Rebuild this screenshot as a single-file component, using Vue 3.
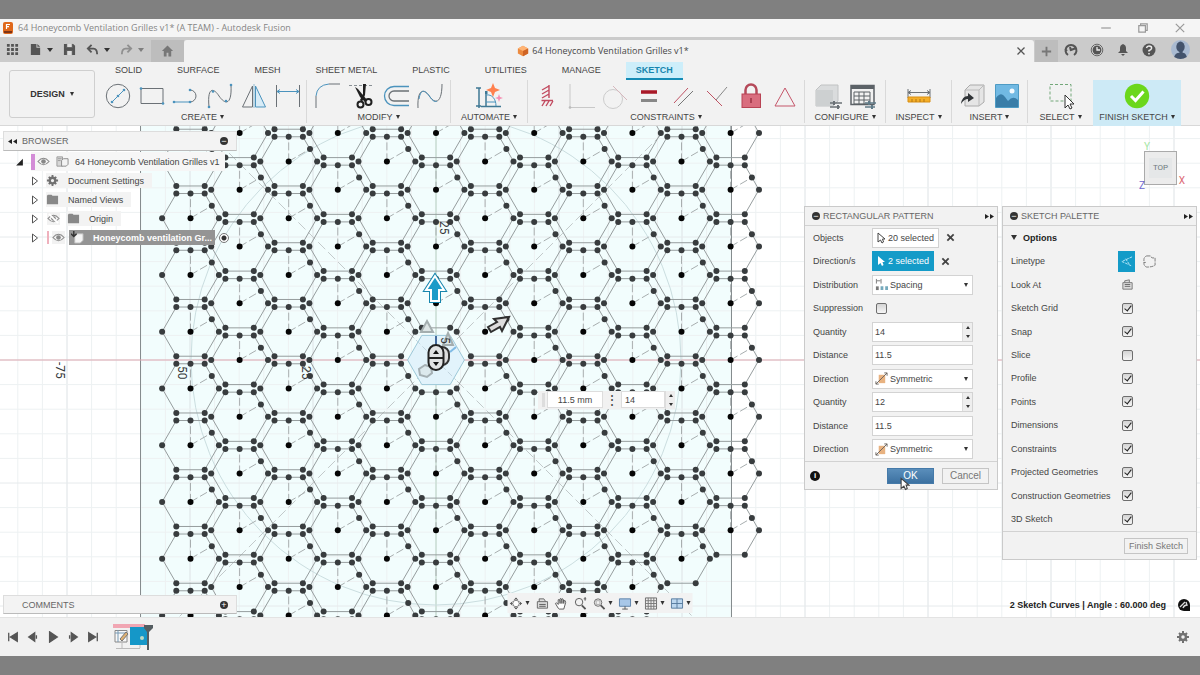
<script setup>
import { ref } from 'vue'

const R = 28.4
const A = 24.6
const cells = []
for (let k = -5; k <= 6; k++) {
  for (let n = -5; n <= 5; n++) {
    const row = k % 2 === 0 ? n : n + 0.5
    if (k === 0 && n === 0) continue
    if (k === 6 && row > 3) continue
    if (k === 5 && row > 3.5) continue
    cells.push({ x: 436 + k * 49.1, y: 360 + row * 56.75 })
  }
}
const hex = `M${-R} 0 L-14.2 ${-A} H14.2 L${R} 0 L14.2 ${A} H-14.2Z`
const nodes = [[-R, 0], [-14.2, -A], [0, -A], [14.2, -A], [21.3, -12.3], [R, 0], [14.2, A], [-14.2, A]]
const vLines = Array.from({ length: 49 }, (_, i) => ({ p: 436 + (i - 18) * 24.6, major: (i - 18) % 5 === 0 }))
const hLines = Array.from({ length: 21 }, (_, i) => ({ p: 360 + (i - 10) * 24.6, major: (i - 10) % 5 === 0 }))

const g = '#6b7176'
const b = '#4b93bd'
const red = '#c5566a'
const dot = (x, y, c = b) => `<circle cx="${x}" cy="${y}" r="1.3" fill="${c}"/>`
const icons = {
  circle: `<circle cx="14" cy="14" r="11.7" stroke="${g}"/><path d="M8 20 20 8" stroke="${b}"/>${dot(8, 20)}${dot(14, 14)}${dot(20, 8)}`,
  rect: `<path d="M3 6.500H25V21.500H3z" stroke="${g}"/>${dot(3, 6.500)}${dot(25, 21.500)}`,
  arc: `<path d="M2 20H18" stroke="${b}"/><path d="M18 8A6 6 0 0 1 18 20" stroke="${g}"/>${dot(2, 20)}${dot(18, 20)}${dot(18, 8)}`,
  spline: `<path d="M3 25C1 4 8 6 13 14C20 24 26 22 25 3" stroke="${g}"/>${dot(3, 25)}${dot(7, 9.500)}${dot(20, 19)}${dot(25, 3)}`,
  mirror: `<path d="M12.500 4V25H2.500z" stroke="${g}"/><path d="M15.500 4V25H25.500z" stroke="${b}" fill="#d8ecf7"/><path d="M14 2V26" stroke="${b}" stroke-width=".6"/>`,
  dimension: `<path d="M2.500 3V25M25.500 3V25" stroke="${g}"/><path d="M3 9.500H25M6 7.500 3 9.500 6 11.500M22 7.500 25 9.500 22 11.500" stroke="${b}"/>`,
  fillet: `<path d="M2 14Q3 3 15 2" stroke="${b}"/><path d="M2 14V26M15 2H26" stroke="${g}"/>`,
  trim: `<path d="M1 3.500H26" stroke="#899095" stroke-dasharray="3 2"/><path d="M7 5 10 7 19 18 17 20 12 15z" fill="#202020"/><path d="M15 2H18L17 13 14 20 12 18 15 12z" fill="#202020"/><circle cx="12.500" cy="22.500" r="3" stroke="#202020" stroke-width="2"/><circle cx="20.500" cy="20" r="3" stroke="#202020" stroke-width="2"/>`,
  offset: `<path d="M27 4.500H12A9.500 9.500 0 0 0 12 23.500H27" stroke="${b}" stroke-width="1.300"/><path d="M27 9H12A5 5 0 0 0 12 19H27" stroke="${g}" stroke-width="1.300"/>`,
  curve: `<path d="M2 26C1 5 9 7 14 15C20 23 26 20 26 2" stroke="${g}"/><path d="M3 17C5 5 10 9 14 15Q18 21 21 19" stroke="${b}"/>`,
  automate: `<path d="M4 6V26M1 6H6M1 24H6M6 24.500H26M11 10V24" stroke="#3f7894" stroke-width="1.500"/><path d="M11 13C17 12 21 17 21 24M11 20H21" stroke="${b}"/><rect x="10" y="9" width="2.500" height="3" fill="#3f7894"/><path d="M18 1 20 6 25 8 20 10 18 15 16 10 11 8 16 6z" fill="#ff804e"/><path d="M24 12 25 15 28 16 25 17 24 20 23 17 20 16 23 15z" fill="#f58db1"/>`,
  fix: `<path d="M16 3V16M8.500 18.500H20M9 8 16 4M9 12 16 8M9 16 16 12M9 24 12 19M13 24 16 19M17 24 20 19" stroke="#c24b60" stroke-width="1.400"/>`,
  perpendicular: `<path d="M3 2V25.500H28" stroke="#c8c8c8"/>${dot(3, 25.500, '#bbb')}`,
  tangent: `<circle cx="12" cy="17" r="9.500" stroke="#ccc"/><path d="M12 4 26 18" stroke="#d6b7bd"/>`,
  equal: `<path d="M6 10H22" stroke="#a91928" stroke-width="3.500"/><path d="M6 18.500H22" stroke="#888" stroke-width="3"/>`,
  parallel: `<path d="M5 21 19 6" stroke="#bf5364"/><path d="M9 24 24 9" stroke="#777"/>`,
  coincident: `<path d="M4 9 19 24" stroke="#bf5364"/><path d="M13 18 24 5" stroke="#888"/>`,
  lock: `<path d="M8.500 12V8A5.500 5.500 0 0 1 19.500 8V12" stroke="#b54a5a" stroke-width="2.500"/><rect x="5" y="12" width="18.500" height="13.500" fill="#d96d7e" stroke="#b84354"/><path d="M14 16V21" stroke="#9b3345" stroke-width="1.500"/>`,
  triangle: `<path d="M14 6 24 24H4z" stroke="${red}"/>`,
  configure: `<path d="M2 8 7 3H24V19L19 24H2z" fill="#dadcdd" stroke="#c0c2c3"/><path d="M19 8V24H2V8z" fill="#cdd0d1"/><path d="M16 21H28M16 25H26" stroke="${g}" stroke-width="1.500"/><path d="M20 19V23M24 23V27" stroke="${g}" stroke-width="2"/>`,
  table: `<path d="M3 3.500H26V22.500H3z" stroke="#5c6267" stroke-width="1.500"/><path d="M3 5H26" stroke="#5c6267" stroke-width="4"/><path d="M6 10H22V22H6zM11 10V22M16 10V22M6 14H22M6 18H22" stroke="#5c6267"/><path d="M17 21H28M17 25H27" stroke="#607b88" stroke-width="1.500"/><path d="M21 19V23M24 23V27" stroke="#607b88" stroke-width="2"/>`,
  measure: `<path d="M3 7V16M25 7V16M3 10.500H25M6 8.500 3 10.500 6 12.500M22 8.500 25 10.500 22 12.500" stroke="${g}"/><path d="M3 15H25V20H3z" fill="#f4ae28" stroke="#d88e13"/><path d="M7 17V20M11 17V20M15 17V20M19 17V20" stroke="#b37613"/>`,
  insert: `<path d="M6 8 11 3H25V20L20 24H6z" fill="#e5e5e5" stroke="#aaa"/><path d="M6 8H20V24M20 8 25 3" stroke="#bbb"/><path d="M2 22Q3 14 9 14V11L15 16 9 20V17Q5 17 2 22z" fill="#303437"/>`,
  image: `<path d="M2.500 2.500H25.500V25.500H2.500z" fill="#71b9e3" stroke="#4e9bc4"/><circle cx="19" cy="9" r="2.500" fill="#f3faff"/><path d="M3 16Q8 9 12 15L15 19Q20 13 25 18V25H3z" fill="#397da8"/>`,
  select: `<path d="M3 2.500H24V19H3z" stroke="#72a779" stroke-dasharray="3 2"/><path d="M18 13V26L21 23 23 27 25 26 23 22 27 22z" fill="#fff" stroke="#333"/>`,
  finish: `<circle cx="14" cy="14" r="12.200" fill="#6bd71b"/><path d="M8 14 12.500 18.500 20.500 9.500" stroke="white" stroke-width="3"/>`
}
const groups = [
  ['CREATE', ['circle', 'rect', 'arc', 'spline', 'mirror', 'dimension']],
  ['MODIFY', ['fillet', 'trim', 'offset', 'curve']],
  ['AUTOMATE', ['automate']],
  ['CONSTRAINTS', ['fix', 'perpendicular', 'tangent', 'equal', 'parallel', 'coincident', 'lock', 'triangle']],
  ['CONFIGURE', ['configure', 'table']],
  ['INSPECT', ['measure']],
  ['INSERT', ['insert', 'image']],
  ['SELECT', ['select']],
  ['FINISH SKETCH', ['finish']]
]
const tabs = ['SOLID', 'SURFACE', 'MESH', 'SHEET METAL', 'PLASTIC', 'UTILITIES', 'MANAGE', 'SKETCH']
const rows = ref([
  { label: 'Quantity', type: 'number', value: '14' },
  { label: 'Distance', type: 'text', value: '11.5' },
  { label: 'Direction', type: 'select' },
  { label: 'Quantity', type: 'number', value: '12' },
  { label: 'Distance', type: 'text', value: '11.5' },
  { label: 'Direction', type: 'select' }
])
const options = ref([
  ['Sketch Grid', true], ['Snap', true], ['Slice', false], ['Profile', true], ['Points', true], ['Dimensions', true],
  ['Constraints', true], ['Projected Geometries', true], ['Construction Geometries', true], ['3D Sketch', true]
])
const eye = '<path d="M1 7Q7 0 13 7Q7 14 1 7z" stroke="#888" stroke-width="1.200"/><circle cx="7" cy="7" r="2.500" fill="#888"/>'
const folder = '<path d="M1 3 2 2H6L7 3H13V12H1z" fill="#888"/>'
const gear = '<path d="M7 1V13M1 7H13M3 3 11 11M11 3 3 11" stroke="#717171" stroke-width="2"/><circle cx="7" cy="7" r="3" stroke="#717171" stroke-width="2.500" fill="#f0f0f0"/>'
const part = '<path d="M1 2H7V12H1z" fill="#d7d7d7" stroke="#999"/><path d="M2 4H6M2 6H5" stroke="#999"/><path d="M6 6 8 4H13V10L11 12H6z" fill="#f3f3f3" stroke="#888"/>'
const component = '<path d="M4 6 7 3H13V10L10 13H4z" fill="#f4f4f4" stroke="#bbb"/><path d="M3 0V6M0 3 3 6 6 3" stroke="#333" stroke-width="1.500"/>'
const tree = [
  { name: 'Document Settings', icon: gear },
  { name: 'Named Views', icon: folder },
  { name: 'Origin', icon: folder, hidden: true },
  { name: 'Honeycomb ventilation Gr...', icon: component, active: true }
]
const nav = [
  { n: 'Orbit', c: true, p: '<path d="M7 1V13M1 7H13M5 3 7 1 9 3M5 11 7 13 9 11M3 5 1 7 3 9M11 5 13 7 11 9" stroke="#555"/><circle cx="7" cy="7" r="3.500" stroke="#777" fill="#fff"/>' },
  { n: 'Look at', p: '<path d="M2 5H13V12H2zM4 5V2L9 2 11 5" stroke="#666" fill="#ddd"/><path d="M4 8H11M4 10H11" stroke="#555"/>' },
  { n: 'Pan', p: '<path d="M4 12 1 7Q2 5 4 8V3Q6 1 6 7V2Q8 0 8 7V2Q10 1 10 7V4Q12 3 12 6L10 13H5z" fill="#fff" stroke="#555"/>' },
  { n: 'Zoom', p: '<circle cx="6" cy="5.500" r="4" stroke="#555"/><path d="M9 9 13 13" stroke="#555" stroke-width="2"/><path d="M11 2H14M12.500 0V4" stroke="#555"/>' },
  { n: 'Fit', c: true, p: '<circle cx="6" cy="6" r="4" stroke="#666"/><path d="M4 4H8V8H4z" stroke="#aaa"/><path d="M9 9 13 13" stroke="#555" stroke-width="2"/>' },
  { n: 'Display', c: true, p: '<path d="M1 2H13V10H1z" fill="#a8c7e8" stroke="#597ea8"/><path d="M7 10V13M4 13H10" stroke="#555"/>' },
  { n: 'Grid', c: true, p: '<path d="M1 1H13V13H1z" fill="#eee" stroke="#666"/><path d="M4 1V13M7 1V13M10 1V13M1 4H13M1 7H13M1 10H13" stroke="#777"/>' },
  { n: 'Viewports', c: true, p: '<path d="M1 2H13V12H1zM7 2V12M1 7H13" fill="#bcd7ef" stroke="#55799d"/>' }
]
const playback = [
  ['Go to start', 'M2 2V12M12 2 4 7 12 12z'],
  ['Step back', 'M9 2 2 7 9 12zM11 5V9'],
  ['Play', 'M3 1 12 7 3 13z'],
  ['Step forward', 'M5 2 12 7 5 12zM3 5V9'],
  ['Go to end', 'M12 2V12M2 2 10 7 2 12z']
]
</script>

<template>
  <div class="page">
    <div class="band"></div>
    <header class="title">
      <svg class="logo" viewBox="0 0 12 14"><rect x="1" y="1" width="10" height="12" rx="2" fill="#df681b" /><path d="M2 10H10V12H2z" fill="#7e3416" /><path d="M4.500 8V3.500H8M4.500 5.700H7" stroke="#fff" stroke-width="1.200" fill="none" /></svg>
      <span>64 Honeycomb Ventilation Grilles v1* (A TEAM) - Autodesk Fusion</span>
      <div class="window-buttons">
        <button aria-label="Minimize"><svg viewBox="0 0 10 10"><path d="M1 5H9" /></svg></button>
        <button aria-label="Restore"><svg viewBox="0 0 10 10"><path d="M1.500 3H7V8.500H1.500zM3 3V1.500H8.500V7H7" /></svg></button>
        <button aria-label="Close"><svg viewBox="0 0 10 10"><path d="M1.500 1.500 8.500 8.500M8.500 1.500 1.500 8.500" /></svg></button>
      </div>
    </header>

    <nav class="appbar">
      <div class="quick">
        <button aria-label="Data panel"><svg viewBox="0 0 14 14"><path d="M1 1H4V4H1zM5.500 1H8.500V4H5.500zM10 1H13V4H10zM1 5.500H4V8.500H1zM5.500 5.500H8.500V8.500H5.500zM10 5.500H13V8.500H10zM1 10H4V13H1zM5.500 10H8.500V13H5.500zM10 10H13V13H10z" fill="#555" /></svg></button>
        <button aria-label="File"><svg viewBox="0 0 14 14"><path d="M2 1H8V5H12V13H2zM9 1 12 4H9z" fill="#555" /></svg><i class="caret"></i></button>
        <button aria-label="Save"><svg viewBox="0 0 14 14"><path d="M1 1H11L13 3V13H1z" fill="#555" /><path d="M4 1V5H10V1M4 13V8H10V13" fill="#ddd" stroke="#555" /></svg></button>
        <button aria-label="Undo"><svg viewBox="0 0 14 14"><path d="M6 2 2 6 6 10M2 6H8Q12 6 12 12" fill="none" stroke="#555" stroke-width="2" /></svg><i class="caret"></i></button>
        <button class="muted" aria-label="Redo"><svg viewBox="0 0 14 14"><path d="M8 2 12 6 8 10M12 6H6Q2 6 2 12" fill="none" stroke="#555" stroke-width="2" /></svg><i class="caret"></i></button>
      </div>
      <button class="home" aria-label="Home"><svg viewBox="0 0 14 14"><path d="M7 1 13 7H11V13H8V9H6V13H3V7H1z" fill="#777" /></svg></button>
      <div class="doc-tab">
        <svg viewBox="0 0 14 14"><path d="M1 4 7 1 13 4V10L7 13 1 10z" fill="#ec8a3f" /><path d="M1 4 7 7 13 4 7 1z" fill="#ffb475" /><path d="M7 7V13L13 10V4z" fill="#cf6425" /></svg>
        <span>64 Honeycomb Ventilation Grilles v1*</span>
        <button class="tab-close" aria-label="Close tab"><svg viewBox="0 0 10 10"><path d="M1.500 1.500 8.500 8.500M8.500 1.500 1.500 8.500" stroke="#555" stroke-width="1.300" /></svg></button>
      </div>
      <button class="new" aria-label="New tab"><svg viewBox="0 0 14 14"><path d="M7 2V12M2 7H12" stroke="#777" stroke-width="2" /></svg></button>
      <div class="account">
        <button aria-label="Extensions"><svg viewBox="0 0 14 14"><path d="M4 12A5.500 5.500 0 1 1 10 12M7 7 12 5M6 4 7 8M3 8 1 6" fill="none" stroke="#555" stroke-width="2" /></svg></button>
        <button aria-label="Jobs"><svg viewBox="0 0 14 14"><circle cx="7" cy="7" r="5.800" fill="#ddd" stroke="#666" /><circle cx="7" cy="7" r="4.500" fill="#555" /><path d="M7 4V7H10" fill="none" stroke="#eee" stroke-width="1.300" /></svg></button>
        <button aria-label="Notifications"><svg viewBox="0 0 14 14"><path d="M2 10 4 8V5Q4 2 7 1Q10 2 10 5V8L12 10zM5 11H9L7 13z" fill="#555" /></svg></button>
        <button aria-label="Help"><svg viewBox="0 0 14 14"><circle cx="7" cy="7" r="6.500" fill="#555" /><path d="M4.500 5Q5 3 7 3Q10 3 9.500 5.500Q9 7 7 7.500V8.500M7 10V11.500" fill="none" stroke="#eee" stroke-width="1.500" /></svg></button>
        <button class="avatar" aria-label="Profile"><svg viewBox="0 0 18 18"><circle cx="9" cy="9" r="9" fill="#a9bad1" /><ellipse cx="9" cy="6.500" rx="4" ry="5" fill="#43536c" /><path d="M3 16Q4 12 8 12V9H11V12Q14 12 15 16Q9 20 3 16z" fill="#43536c" /></svg></button>
      </div>
    </nav>

    <section class="ribbon">
      <button class="design">DESIGN <i class="caret"></i></button>
      <nav class="tabs"><button v-for="t in tabs" :key="t" :class="{ on: t === 'SKETCH' }">{{ t }}</button></nav>
      <div v-for="[name, list] in groups" :key="name" class="group" :class="{ finish: name === 'FINISH SKETCH', last: name === 'SELECT' }">
        <div class="tools"><button v-for="i in list" :key="i" :aria-label="i"><svg viewBox="0 0 28 28" fill="none" v-html="icons[i]"></svg></button></div>
        <button class="group-name">{{ name }} <i class="caret"></i></button>
      </div>
    </section>

    <main class="canvas">
      <svg class="sketch" viewBox="0 126 1200 491" preserveAspectRatio="xMidYMid slice" fill="none">
        <rect x="140" y="60" width="592" height="600" fill="#f2fdfd" />
        <path v-for="l in vLines" :key="'v' + l.p" :d="`M${l.p} 60V680`" :stroke="l.major ? '#dde2e5' : '#edf1f2'" />
        <path v-for="l in hLines" :key="'h' + l.p" :d="`M-10 ${l.p}H1210`" :stroke="l.major ? '#e6eaec' : '#edf1f2'" />
        <path d="M140.500 60V660M731.500 60V660" stroke="#858c8e" />
        <path d="M436 60V660" stroke="#bcd8c8" />
        <path d="M-10 360H1210" stroke="#dfaab3" />
        <circle cx="436" cy="360" r="245" stroke="#cbdee0" />
        <path d="M140 64 732 656M140 656 732 64" stroke="#c3cacb" stroke-dasharray="10 4" />
        <g v-for="(c, i) in cells" :key="i" :transform="`translate(${c.x} ${c.y})`">
          <path :d="hex" stroke="#969d9e" />
          <path d="M0 0V-24.600M0 0 21.300 -12.300" stroke="#a8aeaf" stroke-dasharray="8 3" />
          <circle v-for="(p, j) in nodes" :key="j" :cx="p[0]" :cy="p[1]" r="3" fill="#383c3e" />
          <circle r="3" fill="#050505" />
        </g>
        <g transform="translate(436 360)"><path :d="hex" fill="#e2f3fb" stroke="#9cc8d8" /><path d="M-20 -20 20 20M0 0 20 -12" stroke="#c2d5df" stroke-dasharray="6 3" /><path d="M0 -24V-12" stroke="#456b9d" stroke-width="2" /><path d="M14 -8 20 -13" stroke="#80bbe5" stroke-width="2" /></g>
        <path d="M427 321 433 332H421zM448 333 453 345H443z" fill="#dde5e5" stroke="#a4aeaf" stroke-width="2" />
        <path d="M425 365 431 367 432 373 427 377 420 375 419 369z" fill="#dce9ed" stroke="#a5b0b4" stroke-width="2" />
        <g fill="#343839" font-family="Roboto, sans-serif" font-size="12">
          <text transform="translate(56 362) rotate(90)">-75</text><text transform="translate(178 366) rotate(90)">50</text><text transform="translate(302 366) rotate(90)">25</text><text transform="translate(440 221) rotate(90)">25</text><text transform="translate(441 337) rotate(90)">5</text>
        </g>
        <path d="M435 276 444 290H439V301H431V290H426z" fill="#1d9bc8" stroke="#1685ad" stroke-width="4" /><path d="M435 276 444 290H439V301H431V290H426z" fill="#1d9bc8" stroke="#fff" stroke-width="2" />
        <path d="M488 327 497 322 494 319 509 317 502 331 500 327 491 332z" fill="#ddd" stroke="#303030" stroke-width="2" />
        <rect x="435" y="347" width="14" height="18" rx="7" fill="#ddd" stroke="#333" stroke-width="2" />
        <rect x="428.500" y="345" width="15" height="25" rx="7.500" fill="#e1e3e4" stroke="#222" stroke-width="2" /><path d="M429 358H443" stroke="#222" stroke-width="2" /><path d="M436 350 439 354H433zM436 366 439 362H433z" fill="#111" />
      </svg>

      <aside class="browser">
        <div class="browser-head"><svg class="rewind" viewBox="0 0 9 7"><path d="M4 1V6L0 3.500zM9 1V6L5 3.500z" /></svg><span>BROWSER</span><i class="minus">−</i></div>
        <div class="tree-root"><svg class="expand" viewBox="0 0 8 8"><path d="M7 1V7H1z" fill="#222" /></svg><i class="stripe"></i><svg class="tree-icon" viewBox="0 0 14 14" fill="none" v-html="eye"></svg><svg class="tree-icon" viewBox="0 0 14 14" fill="none" v-html="part"></svg><span>64 Honeycomb Ventilation Grilles v1</span></div>
        <div v-for="t in tree" :key="t.name" class="tree-row" :class="{ active: t.active }">
          <svg class="expand" viewBox="0 0 8 10"><path d="M2 1 7 5 2 9z" fill="#fff" stroke="#555" /></svg>
          <i v-if="t.active" class="stripe pink"></i>
          <svg v-if="t.hidden || t.active" class="tree-icon" viewBox="0 0 14 14" fill="none"><g v-html="eye"></g><path v-if="t.hidden" d="M2 2 12 12" stroke="#fff" stroke-width="2" /></svg>
          <div class="tree-name"><svg class="tree-icon" viewBox="0 0 14 14" fill="none" v-html="t.icon"></svg><span>{{ t.name }}</span></div>
          <input v-if="t.active" type="radio" checked aria-label="Activate component">
        </div>
      </aside>

      <button class="cube" aria-label="Top view"><span>TOP</span><i class="ax-y">Y</i><i class="ax-x">X</i><i class="ax-z">Z</i></button>

      <form class="panel pattern" @submit.prevent>
        <h2><i class="minus">−</i>RECTANGULAR PATTERN<svg class="forward" viewBox="0 0 9 7"><path d="M0 1V6L4 3.500zM5 1V6L9 3.500z" /></svg></h2>
        <div class="rows">
          <div class="row"><label for="objects">Objects</label><button id="objects" class="pick"><svg viewBox="0 0 9 12"><path d="M1 1V10L3.500 8 5 11 6.500 10 5.500 7H8z" fill="#fff" stroke="#444" /></svg>20 selected</button><button class="clear" aria-label="Clear objects"><svg viewBox="0 0 10 10"><path d="M1.500 1.500 8.500 8.500M8.500 1.500 1.500 8.500" stroke="#444" stroke-width="2" /></svg></button></div>
          <div class="row"><label for="directions">Direction/s</label><button id="directions" class="pick blue"><svg viewBox="0 0 9 12"><path d="M1 1V10L3.500 8 5 11 6.500 10 5.500 7H8z" fill="#fff" /></svg>2 selected</button><button class="clear" aria-label="Clear directions"><svg viewBox="0 0 10 10"><path d="M1.500 1.500 8.500 8.500M8.500 1.500 1.500 8.500" stroke="#444" stroke-width="2" /></svg></button></div>
          <div class="row"><label for="distribution">Distribution</label><div class="field"><svg class="field-icon" viewBox="0 0 14 14" fill="none"><path d="M1.500 1V6M6.500 1V6M2 3H6" stroke="#777" /><path d="M1 9H4V13H1z" fill="#777" /><path d="M6 9H9V13H6zM11 9H14V13H11z" fill="#75a9bc" /></svg><select id="distribution"><option>Spacing</option></select><i class="caret"></i></div></div>
          <div class="row"><label for="suppression">Suppression</label><input id="suppression" type="checkbox"></div>
          <div v-for="(r, i) in rows" :key="i" class="row">
            <label :for="'pattern-' + i">{{ r.label }}</label>
            <div class="field">
              <template v-if="r.type === 'select'"><svg class="field-icon" viewBox="0 0 14 14" fill="none"><path d="M4 3H11V12H4z" fill="#e8b280" /><path d="M1 13 13 1M10 1H13V4M1 10V13H4" stroke="#69625c" /></svg><select :id="'pattern-' + i"><option>Symmetric</option></select><i class="caret"></i></template>
              <input v-else :id="'pattern-' + i" v-model="r.value" type="text">
              <div v-if="r.type === 'number'" class="spin"><button aria-label="Increase"><i class="caret up"></i></button><button aria-label="Decrease"><i class="caret"></i></button></div>
            </div>
          </div>
        </div>
        <footer><i class="info">i</i><button class="ok">OK</button><button class="plain">Cancel</button></footer>
        <svg class="cursor" viewBox="0 0 9 12"><path d="M1 1V10L3.500 8 5 11 6.500 10 5.500 7H8z" fill="#fff" stroke="#444" /></svg>
      </form>

      <section class="panel palette">
        <h2><i class="minus">−</i>SKETCH PALETTE<svg class="forward" viewBox="0 0 9 7"><path d="M0 1V6L4 3.500zM5 1V6L9 3.500z" /></svg></h2>
        <div class="rows">
          <div class="row options"><i class="caret"></i>Options</div>
          <div class="row"><span class="name">Linetype</span><button class="line-on" aria-label="Construction"><svg viewBox="0 0 14 14" fill="none"><path d="M13 2 2 7 13 12M6 4 10 10" stroke="#b9e8f8" stroke-dasharray="3 1" /></svg></button><button class="line-off" aria-label="Centerline"><svg viewBox="0 0 14 14" fill="none"><path d="M4 1H8Q9 4 13 3V11Q10 13 4 13Q1 12 1 9V5Q1 2 4 1M1 8H3" stroke="#777" stroke-dasharray="4 1" /></svg></button></div>
          <div class="row"><span class="name">Look At</span><button class="look" aria-label="Look At"><svg viewBox="0 0 14 14" fill="none"><path d="M2 5H12V12H2zM4 5V3L9 2V5" fill="#ddd" stroke="#777" /><path d="M4 7H10M4 9H10" stroke="#666" /></svg></button></div>
          <div v-for="o in options" :key="o[0]" class="row"><label :for="o[0]">{{ o[0] }}</label><input :id="o[0]" v-model="o[1]" type="checkbox"></div>
        </div>
        <footer><button class="plain">Finish Sketch</button></footer>
      </section>

      <div class="hud"><i class="grip"></i><input type="text" aria-label="Distance" value="11.5 mm"><i class="dots">⋮</i><input class="qty" type="text" aria-label="Quantity" value="14"><div class="spin"><button aria-label="Increase"><i class="caret up"></i></button><button aria-label="Decrease"><i class="caret"></i></button></div></div>

      <div class="viewbar"><button v-for="n in nav" :key="n.n" :aria-label="n.n"><svg viewBox="0 0 14 14" fill="none" v-html="n.p"></svg><i v-if="n.c" class="caret"></i></button></div>
      <div class="comments"><span>COMMENTS</span><i class="minus">+</i></div>
      <div class="status">2 Sketch Curves | Angle : 60.000 deg<svg viewBox="0 0 14 14"><path d="M13 13H7A6 6 0 1 1 13 7z" fill="#111" /><path d="M3 9 8 4M6 10Q7 7 10 7L9 4" fill="none" stroke="#ddd" stroke-width="1.300" /></svg></div>
    </main>

    <footer class="timeline">
      <div class="playback"><button v-for="p in playback" :key="p[0]" :aria-label="p[0]"><svg viewBox="0 0 14 14"><path :d="p[1]" fill="#555" stroke="#555" stroke-width="1.500" /></svg></button></div>
      <button class="history" aria-label="Sketch history"><svg viewBox="0 0 40 28" fill="none"><path d="M0 1H32V5H0z" fill="#f1a6b3" /><path d="M2 7.500H14V19H2z" fill="#f8f8f8" stroke="#888" /><path d="M2 10H14M5 7V19" stroke="#7799b4" /><path d="M7 16 13 9 15 11 9 18z" fill="#deb071" stroke="#777" /><path d="M17 4H35V22H17z" fill="#1597c8" /><circle cx="29" cy="15" r="2" fill="#bad8c5" /><path d="M3 25.500H27M9 20V25M27 22V25" stroke="#bbb" /><path d="M31 2H40V5L36 9V27H34V9L31 5z" fill="#555d61" /></svg></button>
      <button class="settings" aria-label="Timeline settings"><svg viewBox="0 0 14 14" fill="none" v-html="gear"></svg></button>
    </footer>
    <div class="band"></div>
  </div>
</template>

<style>
html, body { margin: 0; }
</style>

<style scoped>
* { box-sizing: border-box; }
.page { display: flex; flex-direction: column; height: 100vh; overflow: hidden; font: 9px/12px "Liberation Sans", Arial, sans-serif; color: #454545; background: #f1f1f1; }
button, input, select { font: inherit; color: inherit; border: 0; padding: 0; margin: 0; background: none; outline: 0; }
button { display: inline-flex; align-items: center; justify-content: center; white-space: nowrap; }
svg { display: block; flex: none; }
i { font-style: normal; }
.band { flex: none; height: 19px; background: #808080; }
.caret { flex: none; width: 0; height: 0; border: 2px solid transparent; border-top: 4px solid #333; border-bottom: 0; }
.title { display: flex; align-items: center; flex: none; height: 18px; padding: 0 14px 0 2px; gap: 4px; background: #f5f5f5; color: #858585; font: 9px/12px "Open Sans", sans-serif; }
.logo { width: 12px; height: 14px; }
.window-buttons { display: flex; gap: 25px; margin-left: auto; }
.window-buttons svg { width: 12px; height: 12px; fill: none; stroke: #999; }
.appbar { display: flex; flex: none; height: 25px; padding-top: 3px; background: #cbcbcb; }
.quick { display: flex; align-items: center; width: 151px; padding: 0 7px 3px 6px; justify-content: space-between; }
.quick button { gap: 5px; }
.quick svg { width: 13px; height: 13px; }
.quick .caret { border-width: 3px; border-top-width: 4px; border-bottom: 0; }
.muted { opacity: .5; }
.home { width: 33px; background: #bdbdbd; }
.home svg { width: 13px; height: 14px; }
.doc-tab { position: relative; display: flex; align-items: center; justify-content: center; flex: 1; gap: 3px; padding-right: 12px; background: #f2f2f2; border-radius: 3px 3px 0 0; font: 9px/12px "Open Sans", sans-serif; color: #474747; }
.doc-tab svg { width: 12px; height: 12px; }
.doc-tab .tab-close { position: absolute; right: 8px; }
.doc-tab .tab-close svg { width: 10px; height: 10px; fill: none; }
.new { width: 23px; background: #bdbdbd; margin-left: 1px; }
.new svg { width: 13px; height: 13px; }
.account { display: flex; align-items: center; gap: 12px; padding: 0 10px 3px 6px; }
.account svg { width: 14px; height: 14px; }
.account .avatar { margin-left: 3px; }
.account .avatar svg { width: 19px; height: 19px; }

.ribbon { display: grid; flex: none; grid-template-columns: 99fr 208fr 144fr 77fr 277fr 81fr 66fr 76fr 65fr 88fr 19fr; grid-template-rows: 18px 46px; background: #f2f2f2; border-bottom: 1px solid #d8d8d8; height: 64px; }
.design { grid-row: 1 / 3; margin: 8px 4px 8px 9px; border: 1px solid #cfcfcf; border-radius: 3px; gap: 5px; font-weight: bold; color: #333; }
.tabs { display: flex; gap: 15px; grid-column: 2 / -1; padding-left: 6px; }
.tabs button { padding: 0 10px; border-bottom: 2px solid transparent; }
.tabs .on { background: #cdeefa; border-color: #148bb5; color: #1685ae; font-weight: bold; }
.group { display: flex; flex-direction: column; align-items: center; border-right: 1px solid #d9d9d9; margin-bottom: 3px; }
.group.last, .group.finish { border: 0; }
.group.finish { background: #cdeaf6; margin: 0; padding-bottom: 3px; }
.tools { display: flex; flex: 1; align-items: center; gap: 6px; }
.tools svg { width: 28px; height: 28px; }
.group-name { gap: 3px; height: 12px; }

.canvas { position: relative; flex: 1; min-height: 0; overflow: hidden; background: #fff; }
.sketch { width: 100%; height: 100%; }
.browser { position: absolute; left: 3px; top: 5px; width: 234px; }
.browser-head, .comments { display: flex; align-items: center; height: 20px; padding: 0 8px 0 4px; background: #f3f3f3; border: 1px solid #ddd; border-bottom-color: #bbb; color: #666; }
.browser-head span { margin-left: 5px; }
.rewind, .forward { width: 9px; height: 7px; fill: #222; }
.minus { display: inline-flex; align-items: center; justify-content: center; flex: none; width: 8px; height: 8px; border-radius: 50%; background: #333; color: #fff; font-size: 9px; line-height: 8px; }
.browser-head .minus, .comments .minus { margin-left: auto; }
.tree-root, .tree-row { display: flex; align-items: center; height: 19px; }
.tree-root { width: 222px; margin-top: 1px; padding-left: 12px; background: linear-gradient(90deg, transparent 28px, #f6f6f6 28px); }
.expand { width: 9px; height: 10px; }
.stripe { width: 4px; height: 16px; margin-left: 7px; background: #d38cd7; }
.tree-icon { width: 13px; height: 13px; }
.tree-root .tree-icon { margin-left: 2px; }
.tree-root .tree-icon + .tree-icon { margin-left: 6px; }
.tree-root span { margin-left: 6px; white-space: nowrap; }
.tree-row { padding-left: 27px; }
.tree-row > .tree-icon { margin-left: 8px; background: #f2f2f2; }
.tree-name { display: flex; align-items: center; height: 15px; margin-left: 7px; padding-right: 8px; gap: 9px; background: #f3f3f3; }
.stripe.pink { width: 2px; height: 13px; margin-left: 8px; background: #efb1bd; }
.active > .tree-icon { margin-left: 3px; }
.active .tree-name { margin-left: 4px; width: 146px; background: #949494; color: #fff; font-weight: bold; padding-left: 2px; white-space: nowrap; }
.tree-row input { appearance: none; width: 10px; height: 10px; margin-left: 4px; border: 1px solid #777; border-radius: 50%; background: radial-gradient(#333 0 2px, #fff 3px); }

.cube { position: absolute; right: 23px; top: 25px; width: 33px; height: 34px; background: #ececec; border: 1px solid #aaa; font: 8px/12px Roboto, sans-serif; color: #707b80; }
.cube span { padding: 4px; background: #e5e7e8; }
.cube i { position: absolute; font-size: 10px; }
.ax-y { top: -11px; left: -1px; color: #a4e6a4; }
.ax-x { right: -9px; bottom: -3px; color: #dc6b75; }
.ax-z { left: -6px; bottom: -8px; color: #6c67cf; }

.panel { position: absolute; top: 80px; display: flex; flex-direction: column; background: #f2f2f2; border: 1px solid #cacaca; }
.pattern { right: 202px; width: 194px; height: 284px; }
.palette { right: 3px; width: 195px; height: 354px; }
.panel h2 { display: flex; align-items: center; flex: none; margin: 0; height: 19px; padding: 0 3px 0 7px; border-bottom: 1px solid #d2d2d2; font: inherit; color: #666; gap: 3px; }
.forward { margin-left: auto; }
.rows { display: grid; grid-auto-rows: 1fr; flex: 1; }
.row { display: flex; align-items: center; padding-left: 8px; }
.row label, .row .name { flex: none; width: 59px; white-space: nowrap; }
.palette .row label, .palette .row .name { width: 111px; }
.pick { height: 20px; padding: 0 4px; gap: 2px; border: 1px solid #d1d1d1; background: #fff; }
.pick svg { width: 9px; height: 12px; }
.pick.blue { background: #149bc8; border-color: #149bc8; color: #fff; }
.clear { margin-left: 7px; }
.clear svg { width: 9px; height: 9px; }
.field { display: flex; align-items: center; width: 101px; height: 20px; border: 1px solid #d3d3d3; background: #fff; }
.field-icon { width: 13px; height: 13px; margin-left: 2px; }
.field select { appearance: none; flex: 1; min-width: 0; padding-left: 2px; }
.field > .caret { margin-right: 4px; }
.field input { flex: 1; min-width: 0; height: 18px; padding-left: 2px; }
.spin { display: flex; flex-direction: column; flex: none; width: 10px; height: 100%; background: #eee; border-left: 1px solid #ddd; }
.spin button { flex: 1; }
.spin .caret { border-width: 2px; border-top-width: 3px; border-bottom: 0; }
.spin .caret.up { transform: rotate(180deg); }
input[type="checkbox"] { appearance: none; width: 11px; height: 11px; border: 1px solid #6e6e6e; border-radius: 2px; background: linear-gradient(#d4d4d4, #f6f6f6); }
.pattern input[type="checkbox"] { margin-left: 4px; }
input[type="checkbox"]:checked::after { content: ""; display: block; width: 3px; height: 6px; margin: 0 0 0 3px; border: solid #222; border-width: 0 1px 1px 0; transform: rotate(38deg); }
.options { gap: 6px; font-weight: bold; color: #222; }
.options .caret { border-width: 3px; border-top-width: 5px; border-bottom: 0; }
.line-on { width: 17px; height: 21px; margin-left: -4px; background: #149bc8; }
.line-off { margin-left: 8px; }
.line-on svg, .line-off svg, .look svg { width: 13px; height: 13px; }
.look { margin-left: -1px; }
.panel footer { display: flex; align-items: center; justify-content: flex-end; flex: none; height: 28px; padding: 0 8px 0 5px; border-top: 1px solid #d2d2d2; gap: 8px; }
.info { display: flex; align-items: center; justify-content: center; width: 10px; height: 10px; margin-right: auto; border-radius: 50%; background: #111; color: #fff; font: bold 8px/10px "Liberation Sans", sans-serif; }
.ok, .plain { height: 16px; border: 1px solid #c5c5c5; font-size: 10px; color: #777; }
.ok { width: 47px; background: linear-gradient(#5a8ebb, #3c71a1); border-color: #457aa9; color: #fff; }
.pattern .plain { width: 47px; }
.palette .plain { width: 64px; font-size: 9px; }
.cursor { position: absolute; left: 95px; bottom: -2px; width: 10px; height: 14px; }

.hud { position: absolute; left: calc(50% - 62px); top: calc(50% + 19px); display: flex; align-items: center; height: 18px; padding-left: 4px; background: #f1f1f1; }
.hud input { width: 56px; height: 17px; border: 1px solid #ddd; background: #fff; text-align: center; }
.hud .qty { width: 44px; padding-left: 3px; text-align: left; }
.grip { width: 3px; height: 14px; margin-right: 2px; background: #ddd; }
.dots { width: 18px; text-align: center; font-size: 14px; }
.viewbar { position: absolute; left: 50%; bottom: 4px; display: flex; justify-content: center; gap: 6px; height: 20px; padding: 0 2px; transform: translateX(-50%); background: #f2f2f2; }
.viewbar button { gap: 3px; }
.viewbar svg { width: 13px; height: 13px; }
.comments { position: absolute; left: 3px; bottom: 3px; width: 234px; height: 19px; padding-left: 18px; }
.status { position: absolute; right: 9px; bottom: 5px; display: flex; align-items: center; gap: 11px; color: #222; font-weight: bold; }
.status svg { width: 14px; height: 14px; }
.timeline { display: flex; align-items: center; flex: none; height: 39px; padding: 0 10px 0 6px; background: #f1f1f1; border-top: 1px solid #e3e3e3; }
.playback { display: flex; gap: 7px; }
.playback svg { width: 12px; height: 12px; }
.playback button { width: 13px; }
.history { margin-left: 14px; }
.history svg { width: 40px; height: 28px; }
.settings { margin-left: auto; }
.settings svg { width: 14px; height: 14px; }
</style>
